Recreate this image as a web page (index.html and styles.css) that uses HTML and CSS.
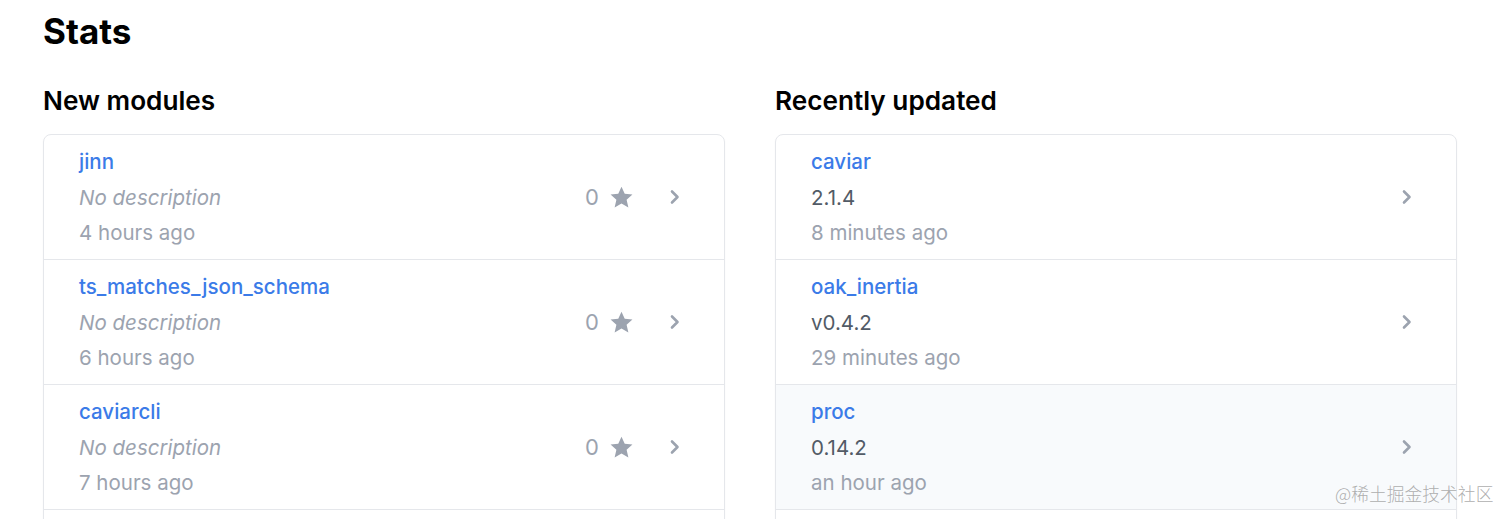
FILE: index.html
```html
<!DOCTYPE html>
<html lang="en">
<head>
<meta charset="utf-8">
<title>Stats</title>
<link rel="stylesheet" href="styles.css">
</head>
<body>
<main class="page">
  <h1 class="title">Stats</h1>
  <div class="columns">
    <section class="col">
      <h2 class="col-title">New modules</h2>
      <ul class="card">
        <li class="row">
          <div class="info">
            <a class="name" href="#">jinn</a>
            <div class="desc">No description</div>
            <div class="date">4 hours ago</div>
          </div>
          <div class="stars">0 <svg class="star" viewBox="0 0 24 24"><path d="M12 1.6l3.1 6.9 7.4.7-5.6 5 1.7 7.4L12 17.8l-6.6 3.8 1.7-7.4-5.6-5 7.4-.7z"/></svg></div>
          <svg class="chev" viewBox="0 0 12 16"><path d="M3 2.5l5.5 5.5L3 13.5"/></svg>
        </li>
        <li class="row">
          <div class="info">
            <a class="name" href="#">ts_matches_json_schema</a>
            <div class="desc">No description</div>
            <div class="date">6 hours ago</div>
          </div>
          <div class="stars">0 <svg class="star" viewBox="0 0 24 24"><path d="M12 1.6l3.1 6.9 7.4.7-5.6 5 1.7 7.4L12 17.8l-6.6 3.8 1.7-7.4-5.6-5 7.4-.7z"/></svg></div>
          <svg class="chev" viewBox="0 0 12 16"><path d="M3 2.5l5.5 5.5L3 13.5"/></svg>
        </li>
        <li class="row">
          <div class="info">
            <a class="name" href="#">caviarcli</a>
            <div class="desc">No description</div>
            <div class="date">7 hours ago</div>
          </div>
          <div class="stars">0 <svg class="star" viewBox="0 0 24 24"><path d="M12 1.6l3.1 6.9 7.4.7-5.6 5 1.7 7.4L12 17.8l-6.6 3.8 1.7-7.4-5.6-5 7.4-.7z"/></svg></div>
          <svg class="chev" viewBox="0 0 12 16"><path d="M3 2.5l5.5 5.5L3 13.5"/></svg>
        </li>
        <li class="row"></li>
      </ul>
    </section>
    <section class="col">
      <h2 class="col-title">Recently updated</h2>
      <ul class="card">
        <li class="row">
          <div class="info">
            <a class="name" href="#">caviar</a>
            <div class="version">2.1.4</div>
            <div class="date">8 minutes ago</div>
          </div>
          <svg class="chev" viewBox="0 0 12 16"><path d="M3 2.5l5.5 5.5L3 13.5"/></svg>
        </li>
        <li class="row">
          <div class="info">
            <a class="name" href="#">oak_inertia</a>
            <div class="version">v0.4.2</div>
            <div class="date">29 minutes ago</div>
          </div>
          <svg class="chev" viewBox="0 0 12 16"><path d="M3 2.5l5.5 5.5L3 13.5"/></svg>
        </li>
        <li class="row hover">
          <div class="info">
            <a class="name" href="#">proc</a>
            <div class="version">0.14.2</div>
            <div class="date">an hour ago</div>
          </div>
          <svg class="chev" viewBox="0 0 12 16"><path d="M3 2.5l5.5 5.5L3 13.5"/></svg>
        </li>
        <li class="row"></li>
      </ul>
    </section>
  </div>
</main>
<div class="watermark">@稀土掘金技术社区</div>
</body>
</html>
```

FILE: styles.css
```css
html, body {
  margin: 0;
  padding: 0;
  background: #ffffff;
  overflow: hidden;
}
body {
  font-family: Inter, "Noto Sans", sans-serif;
  color: #111827;
}
.page {
  padding: 11px 55px 0 43px;
}
.title {
  margin: 0;
  font-size: 35px;
  line-height: 40px;
  font-weight: 700;
  color: #000000;
}
.columns {
  display: grid;
  grid-template-columns: 682px 682px;
  column-gap: 50px;
  margin-top: 34px;
}
.col-title {
  margin: 0 0 17px;
  font-size: 26.2px;
  line-height: 32px;
  font-weight: 600;
  color: #000000;
}
.card {
  list-style: none;
  margin: 0;
  padding: 0;
  border: 1px solid #e5e7eb;
  border-radius: 8px;
  box-shadow: 0 1px 2px rgba(0, 0, 0, 0.04);
  overflow: hidden;
}
.row {
  display: flex;
  align-items: center;
  height: 124px;
  padding: 0 43px 0 35px;
  border-bottom: 1px solid #e5e7eb;
  box-sizing: content-box;
}
.row.hover {
  background: #f8fafc;
}
.info {
  flex: 1;
  display: flex;
  flex-direction: column;
  font-size: 20.5px;
  line-height: 35.5px;
  padding-top: 1px;
}
.name {
  color: #3b7be8;
  font-weight: 500;
  text-decoration: none;
}
.desc {
  color: #9ca3af;
  font-style: italic;
}
.version {
  color: #525b66;
}
.date {
  color: #9ca3af;
}
.stars {
  display: flex;
  align-items: center;
  gap: 10px;
  font-size: 22px;
  color: #9ca3af;
  margin-right: 35px;
}
.star {
  width: 25px;
  height: 25px;
  fill: #9ca3af;
}
.chev {
  width: 12px;
  height: 16px;
  fill: none;
  stroke: #9ca3af;
  stroke-width: 2.6;
  stroke-linecap: round;
  stroke-linejoin: round;
}
.watermark {
  position: absolute;
  left: 1335px;
  top: 481px;
  font-family: "Noto Sans CJK SC", sans-serif;
  font-size: 17.8px;
  line-height: 24px;
  font-weight: 300;
  color: rgba(165, 165, 165, 0.9);
}
```
